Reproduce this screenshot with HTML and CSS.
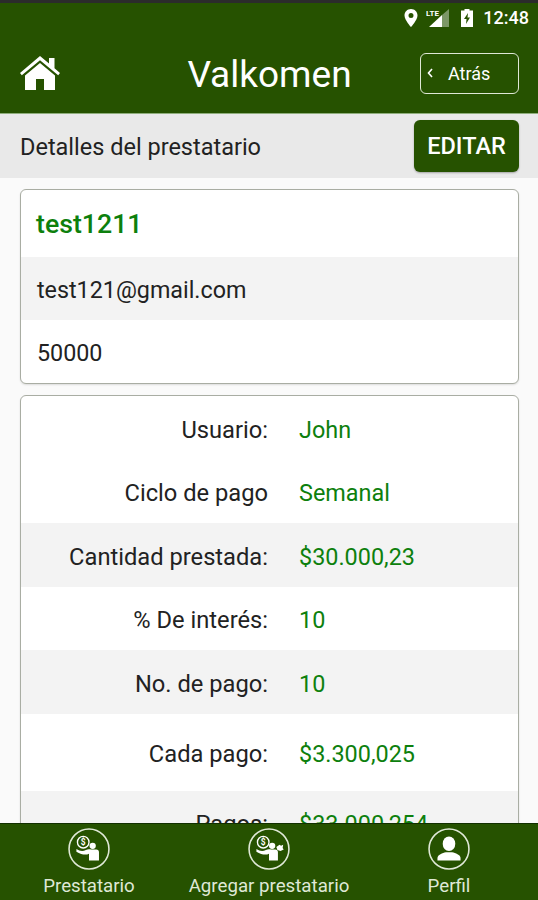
FILE: index.html
```html
<!DOCTYPE html>
<html lang="es">
<head>
<meta charset="utf-8">
<title>Valkomen</title>
<link rel="stylesheet" href="styles.css">
</head>
<body>
<div class="app">
  <header class="topbar">
    <div class="status">
      <svg class="st-pin" viewBox="0 0 14 18"><path fill="#fff" fill-rule="evenodd" d="M7 0C3.200 0 .5 2.900.5 6.400.5 10.800 7 18 7 18s6.500-7.200 6.500-11.600C13.500 2.900 10.800 0 7 0zm0 4a2.500 2.500 0 1 1 0 5 2.500 2.500 0 0 1 0-5z"/></svg>
      <svg class="st-sig" viewBox="0 0 24 18"><path fill="#fff" fill-opacity=".4" d="M23 0v18H16V6z"/><path fill="#fff" d="M16 6v12H3z"/><text x="0" y="7" class="st-lte">LTE</text></svg>
      <svg class="st-bat" viewBox="0 0 12 18"><path fill="#fff" fill-rule="evenodd" d="M3.500 0h5v1.500H12V18H0V1.500h3.500zM7 4 3 10h2.500L5 15l4-6.500H6.500z"/></svg>
      <span class="st-time">12:48</span>
    </div>
    <div class="nav">
      <svg class="home" viewBox="0 0 40 34"><path fill="#fff" d="M20 0 29 7.500V2h5.500v10.200L40 17l-1.800 2.200L20 4.200 1.800 19.200 0 17z"/><path fill="#fff" d="M20 7 35 19.500V34H24V23h-8v11H5V19.500z"/></svg>
      <h1 class="title">Valkomen</h1>
      <button class="back"><svg class="chev" viewBox="0 0 6 10"><path d="M5 1 1.500 5 5 9" fill="none" stroke="#fff" stroke-width="1.600"/></svg><span>Atrás</span></button>
    </div>
  </header>
  <section class="subbar">
    <span class="subtitle">Detalles del prestatario</span>
    <button class="edit">EDITAR</button>
  </section>
  <main class="content">
    <section class="card">
      <div class="line name">test1211</div>
      <div class="line alt">test121@gmail.com</div>
      <div class="line">50000</div>
    </section>
    <section class="card">
      <div class="row"><span class="lbl">Usuario:</span><span class="val">John</span></div>
      <div class="row"><span class="lbl">Ciclo de pago</span><span class="val">Semanal</span></div>
      <div class="row alt"><span class="lbl">Cantidad prestada:</span><span class="val">$30.000,23</span></div>
      <div class="row"><span class="lbl">% De interés:</span><span class="val">10</span></div>
      <div class="row alt"><span class="lbl">No. de pago:</span><span class="val">10</span></div>
      <div class="row tall"><span class="lbl">Cada pago:</span><span class="val">$3.300,025</span></div>
      <div class="row alt"><span class="lbl">Pagos:</span><span class="val">$33.000,254</span></div>
    </section>
  </main>
  <footer class="tabs">
    <div class="tab">
      <svg class="tab-ic" viewBox="0 0 40 40"><circle cx="20" cy="20" r="19" fill="none" stroke="#dfe8d6" stroke-width="1.500"/><circle cx="14.500" cy="13.500" r="5.500" fill="none" stroke="#fff" stroke-width="1.300"/><text x="14.500" y="16.500" class="dollar">$</text><circle cx="23.500" cy="17" r="3" fill="#fff"/><path fill="#fff" d="M8 20c3 2 6 2.500 9 1 2-1 3-1 5-.5h5c1.500 0 2.500 1 2.500 2.500v8H20v-6.500c-3 1.500-7 1-12-2z"/></svg>
      <span class="tab-label">Prestatario</span>
    </div>
    <div class="tab">
      <svg class="tab-ic" viewBox="0 0 40 40"><circle cx="20" cy="20" r="19" fill="none" stroke="#dfe8d6" stroke-width="1.500"/><circle cx="14.500" cy="13.500" r="5.500" fill="none" stroke="#fff" stroke-width="1.300"/><text x="14.500" y="16.500" class="dollar">$</text><circle cx="23" cy="17" r="3" fill="#fff"/><path fill="#fff" d="M27 18l3-2 1.500 1 2-1-.5 3 1 1.500-3 1.500-3-1z"/><path fill="#fff" d="M8 20c3 2 6 2.500 9 1 2-1 3-1 5-.5h4c1.500 0 2.500 1 2.500 2.500v8H20v-6.500c-3 1.500-7 1-12-2z"/></svg>
      <span class="tab-label">Agregar prestatario</span>
    </div>
    <div class="tab">
      <svg class="tab-ic" viewBox="0 0 40 40"><circle cx="20" cy="20" r="19" fill="none" stroke="#dfe8d6" stroke-width="1.500"/><ellipse cx="20" cy="15" rx="6" ry="7" fill="#fff"/><path fill="#fff" d="M9 31v-2.500c0-3 5-5 8-5.500h6c3 .5 8 2.500 8 5.500V31z"/></svg>
      <span class="tab-label">Perfil</span>
    </div>
  </footer>
</div>
</body>
</html>
```
FILE: styles.css
```css
* { box-sizing: border-box; }
html, body { margin: 0; padding: 0; }
body { font-family: Roboto, "Liberation Sans", sans-serif; background: #fafafa; color: #222; }
.app { width: 538px; height: 900px; display: flex; flex-direction: column; overflow: hidden; }

.topbar { height: 114px; flex: none; background: #265200; border-top: 3px solid #2b2b2b; border-bottom: 1px solid #8fae7c; color: #fff; }
.status { height: 29px; display: flex; align-items: center; justify-content: flex-end; padding: 0 9px 0 0; }
.st-pin { width: 14px; height: 18px; margin-right: 8px; }
.st-sig { width: 24px; height: 18px; margin-right: 11px; }
.st-lte { font-size: 8px; font-weight: 700; fill: #fff; }
.st-bat { width: 12px; height: 18px; margin-right: 10px; }
.st-time { font-size: 18px; font-weight: 500; }

.nav { height: 81px; display: grid; grid-template-columns: 1fr auto 1fr; align-items: center; padding: 0 19px 0 20px; }
.home { width: 40px; height: 34px; margin-top: 1px; }
.title { margin: 3px 0 0; font-size: 37px; font-weight: 400; }
.back { justify-self: end; width: 99px; height: 41px; margin-top: 1px; display: flex; align-items: center; background: transparent; border: 1.500px solid #dfe8d6; border-radius: 6px; color: #fff; font: 400 18px Roboto, sans-serif; padding: 0 0 0 6px; }
.chev { width: 6px; height: 10px; margin-right: 15px; }

.subbar { height: 64px; flex: none; background: #e9e9e9; display: flex; align-items: center; justify-content: space-between; padding: 0 19px 0 20px; }
.subtitle { font-size: 23.500px; color: #222; padding-top: 2px; }
.edit { width: 105px; height: 52px; background: #265200; border: 0; border-radius: 6px; color: #fff; font: 500 23.500px Roboto, sans-serif; box-shadow: 0 1px 2px rgba(0,0,0,.3); padding: 0; }

.content { flex: 1; min-height: 0; overflow: hidden; padding: 11px 19px 0 20px; display: flex; flex-direction: column; gap: 11px; }
.card { flex: none; background: #fff; border: 1px solid #a9ada3; border-radius: 6px; overflow: hidden; box-shadow: 0 1px 2px rgba(0,0,0,.12); }
.line { height: 63px; display: flex; align-items: center; padding: 3px 0 0 16px; font-size: 23.300px; }
.line.name { height: 67px; padding-top: 1px; padding-left: 15px; color: #0d800d; font-weight: 500; font-size: 26.700px; }
.alt { background: #f3f3f3; }

.row { height: 63.500px; display: grid; grid-template-columns: 247px 1fr; column-gap: 31px; align-items: center; padding-top: 4px; font-size: 23.700px; }
.row.tall { height: 77px; }
.lbl { text-align: right; }
.val { color: #0d800d; font-size: 23.400px; }

.tabs { height: 77px; flex: none; background: #265200; border-top: 1px solid #123000; display: grid; grid-template-columns: 178px 182px 178px; color: #dfe8d6; }
.tab { display: flex; flex-direction: column; align-items: center; padding-top: 4px; }
.tab-ic { width: 42px; height: 42px; }
.tab-label { font-size: 18.700px; margin-top: 5px; white-space: nowrap; }
.dollar { font-size: 8px; font-weight: 700; fill: #fff; text-anchor: middle; }
```
